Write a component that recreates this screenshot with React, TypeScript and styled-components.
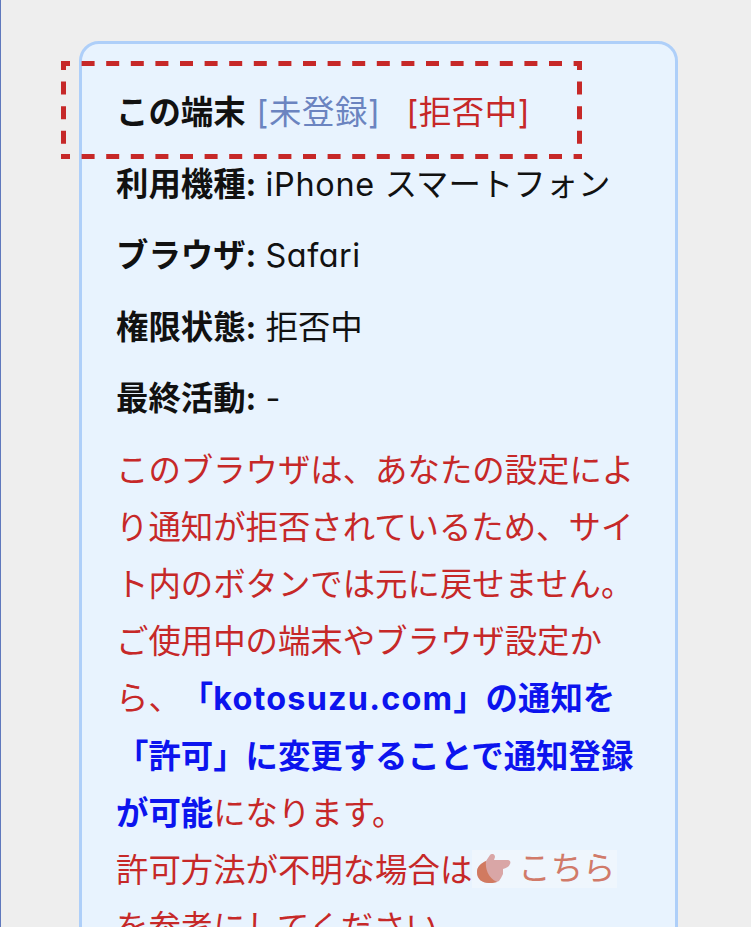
import { createGlobalStyle, styled } from "styled-components";

const GlobalStyle = createGlobalStyle`
  html, body {
    margin: 0;
    padding: 0;
    height: 927px;
    overflow: hidden;
    background: #eeeeee;
  }
`;

const Page = styled.div`
  box-sizing: border-box;
  height: 927px;
  overflow: hidden;
  border-left: 1px solid #5f78bd;
  padding: 41px 74px 0 78px;
  font-family: "Inter", "Noto Sans CJK JP", sans-serif;
  font-feature-settings: "cv11";
  text-spacing-trim: space-all;
  color: #111111;
`;

const Card = styled.section`
  position: relative;
  box-sizing: border-box;
  width: 599px;
  padding: 40px 30px 40px 34px;
  background: #e8f3fe;
  border: 3px solid #aecff9;
  border-radius: 20px;
  font-size: 32.4px;
  line-height: 57.2px;
`;

const Highlight = styled.svg`
  position: absolute;
  left: -21px;
  top: 17px;
  width: 521px;
  height: 98px;
  overflow: visible;
  fill: none;
  stroke: #c62828;
  stroke-width: 5;
  stroke-dasharray: 13 11.6;
  stroke-dashoffset: 4;
`;

const Row = styled.p`
  margin: 0 0 14.3px;
  white-space: nowrap;
`;

const Label = styled.strong`
  font-weight: 700;
`;

const Status = styled.span<{ $color: string; $gap: number }>`
  margin-left: ${(p) => p.$gap}px;
  color: ${(p) => p.$color};
  letter-spacing: 0.6px;
`;

const Latin = styled.span<{ $spacing: number }>`
  letter-spacing: ${(p) => p.$spacing}px;
`;

const Notice = styled.p`
  margin: 0;
  color: #c62828;
`;

const Emphasis = styled.strong`
  font-weight: 700;
  color: #0c14ee;
`;

const HelpLink = styled.a`
  display: inline-flex;
  align-items: center;
  height: 38px;
  gap: 7px;
  padding: 0 2px 0 5px;
  vertical-align: -2px;
  background: #eff6fd;
  color: #d17a69;
`;

const Hand = styled.svg`
  width: 34px;
  height: 30px;
  flex: none;
`;

export default function App() {
  return (
    <Page>
      <GlobalStyle />
      <Card>
        <Highlight viewBox="0 0 521 98">
          <path d="M0 2.5H521M2.5 0V98M518.5 0V98M0 95.5H521" />
        </Highlight>
        <Row>
          <Label>この端末</Label>
          <Status $color="#6b84c0" $gap={11}>[未登録]</Status>
          <Status $color="#c62828" $gap={26}>[拒否中]</Status>
        </Row>
        <Row>
          <Label>利用機種:</Label> <Latin $spacing={0.7}>iPhone </Latin>スマートフォン
        </Row>
        <Row>
          <Label>ブラウザ:</Label> <Latin $spacing={0.5}>Safari</Latin>
        </Row>
        <Row>
          <Label>権限状態:</Label> 拒否中
        </Row>
        <Row>
          <Label>最終活動:</Label> -
        </Row>
        <Notice>
          このブラウザは、あなたの設定により通知が拒否されているため、サイト内のボタンでは元に戻せません。
          <br />
          ご使用中の端末やブラウザ設定から、
          <Emphasis>
            「<Latin $spacing={1.2}>kotosuzu.com</Latin>」の通知を「許可」に変更することで通知登録が可能
          </Emphasis>
          になります。
          <br />
          許可方法が不明な場合は
          <HelpLink>
            <Hand viewBox="0 0 34 30">
              <path
                d="M0 18C0 12 5 9 9 7L13 1C15-1 18 0 18 3L17 6H30C33 6 34 8 33 10C32 13 29 14 26 15L26 20L24 24L22 27C18 29 15 29 12 29C5 29 0 25 0 18Z"
                fill="#d9a6a6"
              />
              <path d="M0 18C0 12 5 9 9 7C8 14 11 24 20 28C16 29 14 29 12 29C5 29 0 25 0 18Z" fill="#d17a60" />
            </Hand>
            こちら
          </HelpLink>
          <br />
          を参考にしてください。
        </Notice>
      </Card>
    </Page>
  );
}
